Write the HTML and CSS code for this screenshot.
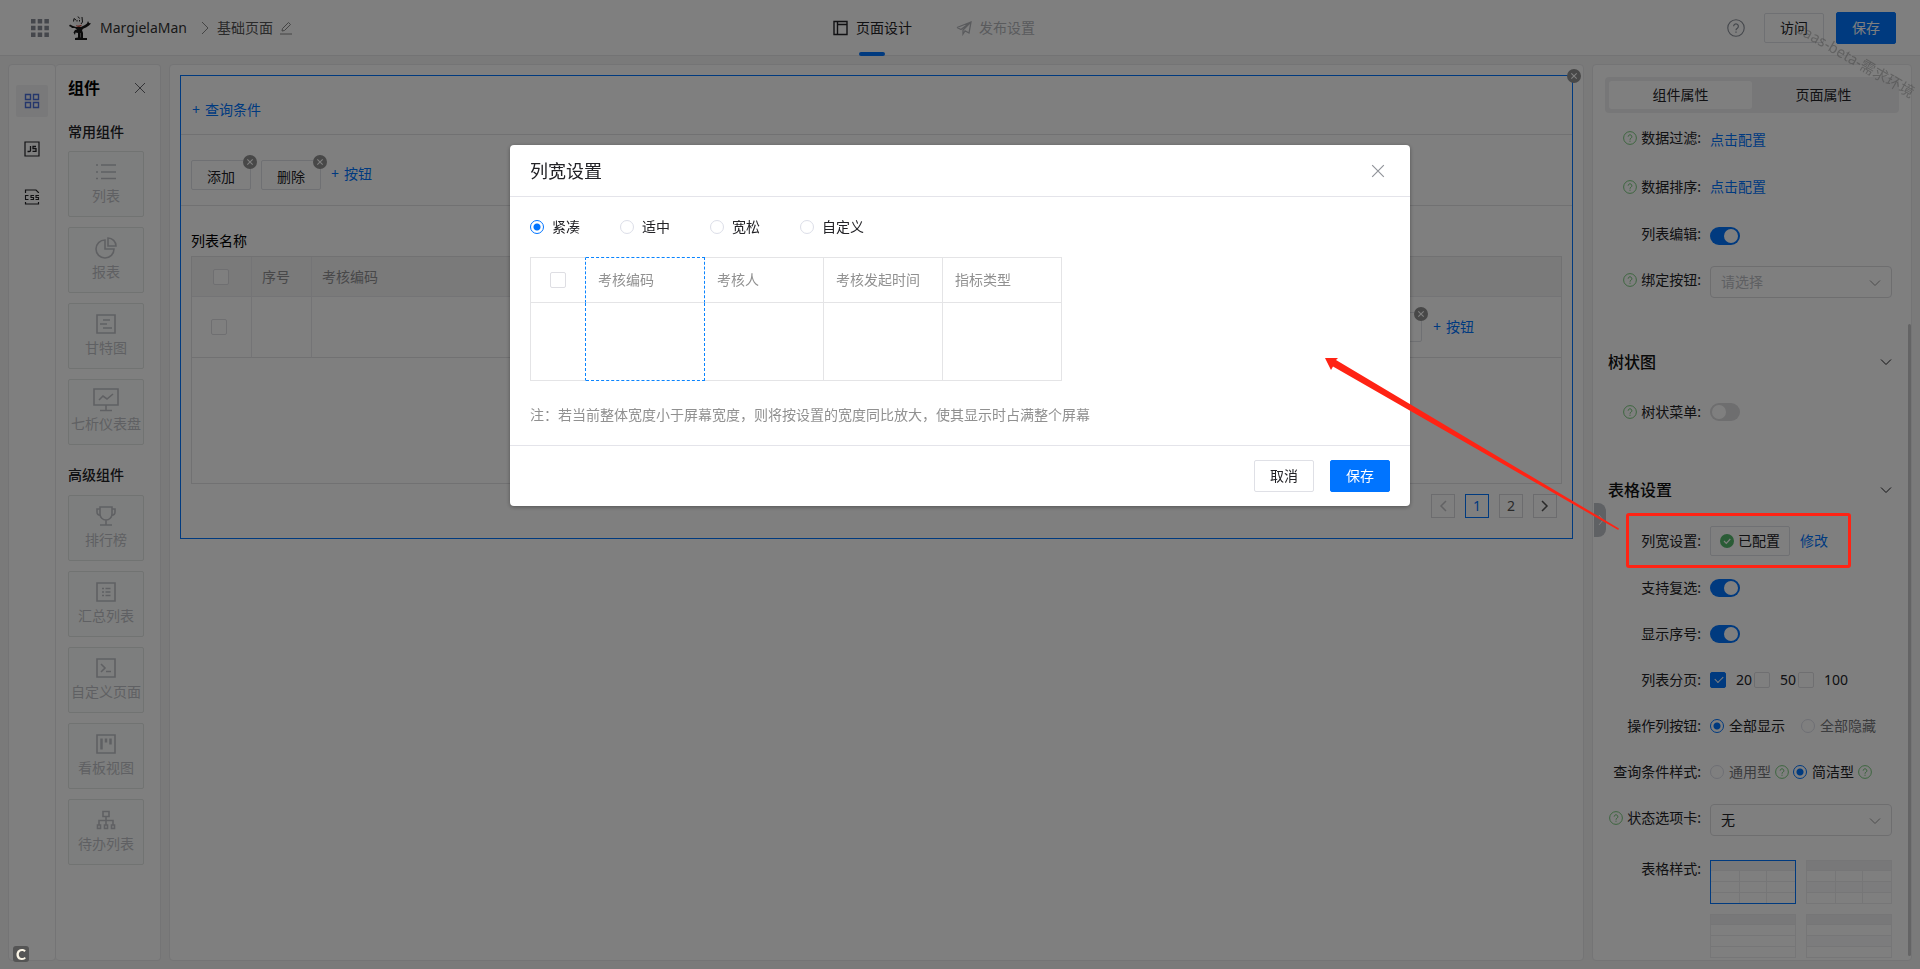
FILE: index.html
```html
<!DOCTYPE html>
<html lang="zh-CN">
<head>
<meta charset="utf-8">
<title>MargielaMan - 基础页面</title>
<link rel="stylesheet" href="styles.css">
</head>
<body>
<svg class="defs" width="0" height="0" aria-hidden="true">
  <symbol id="i-help" viewBox="0 0 16 16"><circle cx="8" cy="8" r="7.3" fill="none" stroke="currentColor"/><path d="M5.9 6.4a2.1 2.1 0 1 1 3.3 1.8C8.4 8.700 8 9 8 9.900M8 11.100v1.200" fill="none" stroke="currentColor" stroke-width="1.100"/></symbol>
  <symbol id="i-down" viewBox="0 0 12 12"><path d="M1 3.500l5 5 5-5" fill="none" stroke="currentColor"/></symbol>
  <symbol id="i-x" viewBox="0 0 12 12"><path d="M1 1l10 10M11 1L1 11" fill="none" stroke="currentColor"/></symbol>
  <symbol id="i-del" viewBox="0 0 14 14"><circle cx="7" cy="7" r="7" fill="#909090"/><path d="M4.300 4.300l5.400 5.400M9.700 4.300L4.300 9.700" stroke="#fff" stroke-width="1.100"/></symbol>
</svg>
<div class="app">
  <header class="topbar">
    <div class="brand">
      <svg class="i-apps" width="18" height="18" viewBox="0 0 18 18"><path d="M0 0h4.500v4.500H0zM6.700 0h4.500v4.500H6.700zM13.400 0h4.500v4.500h-4.500zM0 6.700h4.500v4.500H0zM6.700 6.700h4.500v4.500H6.700zM13.400 6.700h4.500v4.500h-4.500zM0 13.400h4.500v4.500H0zM6.700 13.400h4.500v4.500H6.700zM13.400 13.400h4.500v4.500h-4.500z"/></svg>
      <svg class="logo" width="22" height="24" viewBox="0 0 22 24"><path d="M4.500 3l2 1 1.500-3 3 .5 2-1 .5 5.500-3 3-4-.5-2-2z" fill="#f4f4f4"/><path d="M4.500 5.500l.5-3 2 1.500M9 .5l1.500 2M13 1l.5 5-1.500 2M8 4v1.500M10.500 4v1.500" stroke="#222" fill="none"/><path d="M0 10l1-1.500L4 10l3 1h5l4-2 2-1.500L19 5l1 2 2 .5-2 2-3 2-2.500 1L13 14l1 3v5h4v2H6v-2l3-.5V17l-2.500-.5L6 19l-1.500-2.500L6 14l2-.5L6 12l-3 0-1-1z" fill="#181818"/><path d="M7 9c2 1 4 .5 5.500-.5V10L10 11 7.500 10.500z" fill="#c4493c"/><path d="M11.500 17v4.500" stroke="#777"/></svg>
      <span class="app-name">MargielaMan</span>
      <svg class="crumb" width="8" height="12" viewBox="0 0 8 12"><path d="M1 0l6 6-6 6" fill="none" stroke="currentColor"/></svg>
      <span class="page-name">基础页面</span>
      <svg class="edit" width="14" height="14" viewBox="0 0 14 14"><path d="M1 13h12M3 10l.5-2.500L9.500 1.500l2 2-6 6z" fill="none" stroke="currentColor"/></svg>
    </div>
    <nav class="tabs">
      <a class="tab active" href="#design"><svg width="16" height="16" viewBox="0 0 16 16"><path d="M1 1.500h13v13H1zM4.500 1.500v13M4.500 4.500H14" fill="none" stroke="currentColor" stroke-width="1.400"/></svg>页面设计</a>
      <a class="tab" href="#publish"><svg width="16" height="16" viewBox="0 0 16 16"><path d="M1 7.500L15 2l-2 11-4.500-2.500M1 7.500L5 9.500 15 2 7 10v4l2-3" fill="none" stroke="currentColor" stroke-width="1.300"/></svg>发布设置</a>
    </nav>
    <div class="actions">
      <svg class="help-lg" width="18" height="18"><use href="#i-help"/></svg>
      <button class="btn sm" type="button">访问</button>
      <button class="btn primary" type="button">保存</button>
    </div>
  </header>
  <main class="work">
    <div class="rail">
      <button class="rail-btn on" type="button" aria-label="组件"><svg width="16" height="16" viewBox="0 0 16 16"><path d="M1.500 1.500h5v5h-5zM9.500 1.500h5v5h-5zM1.500 9.500h5v5h-5zM9.500 9.500h5v5h-5z" fill="none" stroke="currentColor" stroke-width="1.400"/></svg></button>
      <button class="rail-btn" type="button" aria-label="JS"><svg width="16" height="16" viewBox="0 0 16 16" fill="none" stroke="currentColor"><path d="M1 1h14v14H1z" stroke-width="1.200"/><path d="M6.500 5v4.500q0 1-1.200 1H3.500M12 5.500H9v2.200h3v2.600H8.500" stroke-width="1.300"/></svg></button>
      <button class="rail-btn" type="button" aria-label="CSS"><svg width="16" height="16" viewBox="0 0 16 16" fill="none" stroke="currentColor"><path d="M1.500 4V1h10.500l2.500 2.500V4M1.500 13v2h13v-2" stroke-width="1.200"/><path d="M4.500 6.500h-3v4h3M10 6.500H7v2h2.500v2H6.500M15 6.500h-3v2h2.500v2h-3" stroke-width="1.100"/></svg></button>
    </div>
    <aside class="comps">
      <div class="comps-head"><h2>组件</h2><button class="plain" type="button" aria-label="收起"><svg width="12" height="12"><use href="#i-x"/></svg></button></div>
      <h3>常用组件</h3>
      <div class="cards">
        <div class="card"><svg width="22" height="22" viewBox="0 0 22 22"><path d="M6 4h15M6 11h15M6 17.500h15M1 4h2M1 11h2M1 17.500h2" /></svg>列表</div>
        <div class="card"><svg width="22" height="22" viewBox="0 0 22 22"><path d="M10 3a9 9 0 1 0 9 9h-9zM13 1v8h8a8 8 0 0 0-8-8z"/></svg>报表</div>
        <div class="card"><svg width="22" height="22" viewBox="0 0 22 22"><path d="M2 2h18v18H2zM8 7h7M5 11h7M8 15h9"/></svg>甘特图</div>
        <div class="card"><svg width="26" height="24" viewBox="0 0 26 24"><path d="M1 1h24v16H1zM13 17v5M7 22.500h12M6 12l4-4 4 3 6-5"/></svg>七析仪表盘</div>
      </div>
      <h3>高级组件</h3>
      <div class="cards">
        <div class="card"><svg width="22" height="22" viewBox="0 0 22 22"><path d="M5 2h12v7a6 6 0 0 1-12 0zM5 4H2v3q0 3 3.500 3.500M17 4h3v3q0 3-3.500 3.500M11 15v5M5 20h12"/></svg>排行榜</div>
        <div class="card"><svg width="22" height="22" viewBox="0 0 22 22"><path d="M2 2h18v18H2zM7 7.500h2M7 11h2M7 14.500h2M10.500 7.500h5M10.500 11h5M10.500 14.500h5"/></svg>汇总列表</div>
        <div class="card"><svg width="22" height="22" viewBox="0 0 22 22"><path d="M2 2h18v18H2zM6 7l4 4-4 4M11 14.500h5"/></svg>自定义页面</div>
        <div class="card"><svg width="22" height="22" viewBox="0 0 22 22"><path d="M2 2h18v18H2z"/><path d="M6.500 5.500v11M11 5.500v4M15.500 5.500v6" stroke-width="2.500"/></svg>看板视图</div>
        <div class="card"><svg width="22" height="22" viewBox="0 0 22 22"><path d="M8 2.500h6v5H8zM11 7.500v8M4 15.500v-4h14v4M2.500 16h3v3.500h-3zM9.500 16h3v3.500h-3zM16.500 16h3v3.500h-3z"/></svg>待办列表</div>
      </div>
    </aside>
    <section class="canvas">
      <div class="block">
        <button class="del corner" type="button" aria-label="删除组件"><svg width="14" height="14"><use href="#i-del"/></svg></button>
        <div class="query"><button class="add" type="button"><span>+</span>查询条件</button></div>
        <div class="tools">
          <span class="tool"><button class="btn sm low" type="button">添加</button><svg class="del" width="14" height="14"><use href="#i-del"/></svg></span>
          <span class="tool"><button class="btn sm low" type="button">删除</button><svg class="del" width="14" height="14"><use href="#i-del"/></svg></span>
          <button class="add" type="button"><span>+</span>按钮</button>
        </div>
        <div class="list">
          <h4>列表名称</h4>
          <div class="grid-box">
            <table class="grid">
              <colgroup><col class="c-sm"><col class="c-sm"><col><col class="c-op"></colgroup>
              <thead><tr><th class="pick"><input class="check" type="checkbox" aria-label="全选"></th><th>序号</th><th>考核编码</th><th></th></tr></thead>
              <tbody><tr><td class="pick"><input class="check" type="checkbox" aria-label="选择行"></td><td></td><td></td><td><div class="ops"><span class="tool"><button class="btn sm" type="button" aria-label="行按钮"></button><svg class="del" width="14" height="14"><use href="#i-del"/></svg></span><button class="add" type="button"><span>+</span>按钮</button></div></td></tr></tbody>
            </table>
          </div>
          <nav class="pager" aria-label="分页">
            <button type="button" class="off" aria-label="上一页"><svg width="8" height="12" viewBox="0 0 8 12"><path d="M7 1L2 6l5 5" fill="none" stroke="currentColor" stroke-width="1.500"/></svg></button>
            <button type="button" class="cur">1</button>
            <button type="button">2</button>
            <button type="button" aria-label="下一页"><svg width="8" height="12" viewBox="0 0 8 12"><path d="M1 1l5 5-5 5" fill="none" stroke="currentColor" stroke-width="1.500"/></svg></button>
          </nav>
        </div>
      </div>
    </section>
    <aside class="props">
      <div class="seg"><button class="on" type="button">组件属性</button><button type="button">页面属性</button></div>
      <div class="form">
        <section class="group first">
          <div class="row tall"><span class="lab"><svg class="q"><use href="#i-help"/></svg>数据过滤:</span><div class="ctl"><a href="#filter">点击配置</a></div></div>
          <div class="row mid"><span class="lab"><svg class="q"><use href="#i-help"/></svg>数据排序:</span><div class="ctl"><a href="#sort">点击配置</a></div></div>
          <div class="row"><label class="lab" for="f-edit">列表编辑:</label><div class="ctl low"><input class="switch" id="f-edit" type="checkbox" checked></div></div>
          <div class="row"><label class="lab" for="f-bind"><svg class="q"><use href="#i-help"/></svg>绑定按钮:</label><div class="ctl low"><span class="sel"><select id="f-bind" class="empty"><option>请选择</option></select><svg width="12" height="12"><use href="#i-down"/></svg></span></div></div>
        </section>
        <section class="group">
          <div class="group-head"><h3>树状图</h3><svg width="12" height="12"><use href="#i-down"/></svg></div>
          <div class="row"><label class="lab" for="f-tree"><svg class="q"><use href="#i-help"/></svg>树状菜单:</label><div class="ctl"><input class="switch" id="f-tree" type="checkbox"></div></div>
        </section>
        <section class="group">
          <div class="group-head"><h3>表格设置</h3><svg width="12" height="12"><use href="#i-down"/></svg></div>
          <div class="row mid"><span class="lab">列宽设置:</span><div class="ctl"><span class="done"><svg width="14" height="14" viewBox="0 0 14 14"><circle cx="7" cy="7" r="7" fill="#54b96d"/><path d="M4 7l2.300 2.300L10.300 5" fill="none" stroke="#fff" stroke-width="1.200"/></svg>已配置</span><a class="modify" href="#width">修改</a></div></div>
          <div class="row"><label class="lab" for="f-multi">支持复选:</label><div class="ctl"><input class="switch" id="f-multi" type="checkbox" checked></div></div>
          <div class="row"><label class="lab" for="f-no">显示序号:</label><div class="ctl"><input class="switch" id="f-no" type="checkbox" checked></div></div>
          <div class="row"><span class="lab">列表分页:</span><div class="ctl pages"><label><input class="check" type="checkbox" checked>20</label><label><input class="check" type="checkbox">50</label><label><input class="check" type="checkbox">100</label></div></div>
          <div class="row"><span class="lab">操作列按钮:</span><div class="ctl radios wide"><label><input class="radio" type="radio" name="op" checked>全部显示</label><label class="dim"><input class="radio" type="radio" name="op">全部隐藏</label></div></div>
          <div class="row"><span class="lab">查询条件样式:</span><div class="ctl radios"><label class="dim"><input class="radio" type="radio" name="qs">通用型</label><svg class="q"><use href="#i-help"/></svg><label><input class="radio" type="radio" name="qs" checked>简洁型</label><svg class="q"><use href="#i-help"/></svg></div></div>
          <div class="row"><label class="lab" for="f-state"><svg class="q"><use href="#i-help"/></svg>状态选项卡:</label><div class="ctl low"><span class="sel"><select id="f-state"><option>无</option></select><svg width="12" height="12"><use href="#i-down"/></svg></span></div></div>
          <div class="row styles"><span class="lab">表格样式:</span><div class="ctl thumbs">
            <div class="thumb on"><i></i><i></i><i></i><b></b><b></b></div>
            <div class="thumb"><i></i><i class="alt"></i><i></i><b></b><b></b></div>
            <div class="thumb"><i></i><i></i><i></i></div>
            <div class="thumb"><i></i><i class="alt"></i><i></i></div>
          </div></div>
        </section>
      </div>
      <div class="bar"></div>
      <button class="handle" type="button" aria-label="收起属性"><svg width="6" height="10" viewBox="0 0 6 10"><path d="M1 0l4 5-4 5" fill="none" stroke="#fff"/></svg></button>
    </aside>
  </main>
</div>
<div class="mask">
  <section class="modal" role="dialog" aria-labelledby="dlg-title">
    <header class="modal-head"><h2 id="dlg-title">列宽设置</h2><button class="plain close" type="button" aria-label="关闭"><svg width="14" height="14"><use href="#i-x"/></svg></button></header>
    <div class="modal-body">
      <div class="modes">
        <label><input class="radio" type="radio" name="mode" checked>紧凑</label>
        <label><input class="radio" type="radio" name="mode">适中</label>
        <label><input class="radio" type="radio" name="mode">宽松</label>
        <label><input class="radio" type="radio" name="mode">自定义</label>
      </div>
      <table class="preview">
        <thead><tr><th class="pick"><input class="check" type="checkbox" aria-label="全选"></th><th class="hot">考核编码</th><th>考核人</th><th>考核发起时间</th><th>指标类型</th></tr></thead>
        <tbody><tr><td class="pick"></td><td class="hot"></td><td></td><td></td><td></td></tr></tbody>
      </table>
      <p class="note">注：若当前整体宽度小于屏幕宽度，则将按设置的宽度同比放大，使其显示时占满整个屏幕</p>
    </div>
    <footer class="modal-foot"><button class="btn" type="button">取消</button><button class="btn primary" type="button">保存</button></footer>
  </section>
</div>
<div class="watermark">saas-beta-需求环境</div>
<div class="badge">C</div>
<div class="callout"></div>
<svg class="arrow" width="294" height="172" viewBox="0 0 294 172"><path d="M0 0h13l-2 2 283 168.500-.8 1.500L8 8.500 6 12z" fill="#ff2314"/></svg>
</body>
</html>
```
FILE: styles.css
```css
* { box-sizing: border-box; }
body {
  margin: 0;
  font: 14px/20px "Noto Sans", "Noto Sans CJK SC", sans-serif;
  color: #222226;
  background: #f4f4f4;
  overflow: hidden;
}
button, input, select { font: inherit; color: inherit; margin: 0; }
button { cursor: pointer; }
svg { flex: none; display: block; }
h2, h3, h4, p { margin: 0; }
a { color: #0074ff; text-decoration: none; }
.defs { position: absolute; }
.app { display: flex; flex-direction: column; height: 100vh; }

/* top bar */
.topbar {
  display: grid;
  grid-template-columns: 1fr auto 1fr;
  height: 56px;
  background: #fff;
  border-bottom: 1px solid #e6e6e8;
}
.brand { display: flex; align-items: center; padding-left: 31px; }
.i-apps { fill: #8a8f99; }
.logo { margin-left: 20px; }
.app-name { margin-left: 9px; color: #333; }
.crumb { margin: 0 8px 0 14px; color: #888; }
.page-name { color: #555; }
.edit { margin-left: 6px; color: #888; }
.tabs { display: flex; gap: 44px; padding-right: 52px; }
.tab { display: flex; align-items: center; gap: 7px; position: relative; color: #b4b6bb; }
.tab.active { color: #222226; }
.tab.active::after {
  content: "";
  position: absolute;
  left: 26px;
  bottom: -1px;
  width: 26px;
  height: 4px;
  border-radius: 2px;
  background: #0074ff;
}
.actions { display: flex; align-items: center; justify-content: flex-end; gap: 12px; padding-right: 24px; }
.help-lg { color: #8a8f99; margin-right: 7px; }
.btn {
  width: 60px;
  height: 32px;
  padding: 0;
  border: 1px solid #dfe0e6;
  border-radius: 2px;
  background: #fff;
}
.btn.sm { height: 30px; }
.btn.low { padding-top: 4px; }
.btn.primary { background: #0074ff; border-color: #0074ff; color: #fff; }
.plain { border: 0; padding: 0; background: none; color: #66676c; }

/* work area */
.work { flex: 1; min-height: 0; display: flex; padding: 8px; }
.rail, .comps, .canvas, .props { background: #fff; border: 1px solid #e8e8ea; border-radius: 4px; }
.rail { flex: none; width: 48px; display: flex; flex-direction: column; align-items: center; gap: 16px; padding-top: 20px; }
.rail-btn { width: 32px; height: 32px; padding: 8px; border: 0; border-radius: 2px; background: none; }
.rail-btn.on { background: #f2f2f4; color: #4a6fd8; }
.comps { flex: none; width: 105px; padding: 13px 14px 0 12px; border-left: 0; }
.comps-head { display: flex; align-items: center; justify-content: space-between; height: 20px; }
.comps-head h2 { font-size: 16px; font-weight: 700; color: #000; }
.comps h3 { margin: 24px 0 9px; font-size: 14px; font-weight: 500; }
.comps .cards + h3 { margin-top: 20px; margin-bottom: 10px; }
.cards { display: grid; gap: 10px; }
.card {
  display: grid;
  grid-template-rows: 24px 20px;
  place-items: center;
  align-content: start;
  gap: 2px;
  height: 66px;
  padding-top: 8px;
  width: 76px;
  white-space: nowrap;
  border: 1px solid #e2e6e4;
  border-radius: 2px;
  background: #fbfdfc;
  color: #bfc1c6;
}
.card svg { fill: none; stroke: currentColor; stroke-width: 1.6; }

/* canvas */
.canvas { flex: 1; min-width: 0; margin: 0 8px; padding: 10px; }
.block { position: relative; border: 1px solid #0074ff; }
.del { position: absolute; top: -5px; right: -6px; }
.corner { top: -7px; right: -9px; padding: 0; border: 0; background: none; }
.add { display: flex; gap: 5px; border: 0; padding: 0; background: none; color: #0074ff; }
.query { display: flex; align-items: center; height: 59px; padding: 10px 11px 0; border-bottom: 1px solid #e2e2e5; }
.tools { display: flex; align-items: flex-start; gap: 10px; height: 71px; padding: 25px 10px 0; border-bottom: 1px solid #e2e2e5; }
.tool { position: relative; display: flex; }
.tools .add { margin-top: 4px; }
.list { padding: 25px 10px 20px; }
.list h4 { font-weight: 400; font-size: 14px; margin-bottom: 5px; color: #000; }
.grid-box { height: 228px; border: 1px solid #e2e2e5; }
.grid { width: 100%; table-layout: fixed; border-collapse: separate; border-spacing: 0; }
.c-sm { width: 60px; }
.c-op { width: 240px; }
.grid th { height: 40px; padding: 0 10px; text-align: left; font-weight: 400; color: #909093; background: #f4f4f4; border-bottom: 1px solid #e8e8ec; }
.grid td { height: 61px; padding: 0 10px; border-bottom: 1px solid #e2e2e5; }
.grid th:nth-child(-n+2), .grid td:nth-child(-n+2) { border-right: 1px solid #e8e8ec; }
.grid .pick { padding: 0 0 0 21px; }
.grid td.pick { padding-left: 19px; }
.ops { display: flex; align-items: center; gap: 11px; padding-left: 31px; }
.pager { display: flex; justify-content: flex-end; gap: 10px; padding: 10px 5px 0 0; }
.pager button { display: grid; place-items: center; width: 24px; height: 24px; padding: 0; border: 1px solid #d8d8dc; background: #fff; color: #555; }
.pager .cur { border-color: #0074ff; color: #0074ff; }
.pager .off { color: #c4c4c8; }

/* form controls */
.check, .radio, .switch { appearance: none; flex: none; display: block; background: #fff; }
.check { width: 16px; height: 16px; border: 1px solid #dedee3; border-radius: 2px; position: relative; }
.check:checked { background: #0074ff; border-color: #0074ff; }
.check:checked::after {
  content: "";
  position: absolute;
  left: 4px;
  top: 3px;
  width: 7px;
  height: 4px;
  border: solid #fff;
  border-width: 0 0 1px 1px;
  transform: rotate(-45deg);
}
.radio { width: 14px; height: 14px; border: 1px solid #dcdee8; border-radius: 50%; }
.radio:checked { border-color: #0074ff; background: radial-gradient(circle, #0074ff 3px, #fff 4px); }
.switch { width: 30px; height: 18px; border-radius: 9px; padding: 2px; background: #dcdcde; }
.switch::before { content: ""; display: block; width: 14px; height: 14px; border-radius: 50%; background: #fff; }
.switch:checked { background: #0074ff; }
.switch:checked::before { margin-left: 12px; }

/* properties */
.props { position: relative; flex: none; width: 320px; padding-top: 12px; overflow: hidden; }
.seg { display: flex; height: 36px; margin: 0 12px; padding: 4px; border-radius: 4px; background: #efeff1; }
.seg button { flex: 1; border: 0; border-radius: 3px; background: none; }
.seg .on { background: #fff; }
.group { margin-bottom: 32px; }
.group.first { margin-bottom: 36px; }
.group-head { display: flex; align-items: center; justify-content: space-between; height: 46px; margin: 0 19px 4px 15px; }
.group-head h3 { font-size: 16px; font-weight: 500; color: #111; }
.row { display: grid; grid-template-columns: 108px 182px; column-gap: 9px; align-items: center; height: 46px; }
.row.tall { height: 50px; }
.row.mid { height: 48px; }
.lab { display: flex; align-items: center; justify-content: flex-end; gap: 4px; white-space: nowrap; }
.q { width: 14px; height: 14px; color: #67c26b; }
.ctl { display: flex; align-items: center; white-space: nowrap; }
.ctl.low, .tall .ctl { margin-top: 4px; }
.sel { position: relative; flex: 1; }
.sel select { appearance: none; display: block; width: 100%; height: 32px; padding: 0 10px; border: 1px solid #dcdcdf; border-radius: 4px; background: #fff; }
.sel .empty { color: #bdbfc5; }
.sel svg { position: absolute; right: 11px; top: 11px; color: #999; }
.done { display: flex; align-items: center; gap: 4px; height: 30px; padding: 0 9px; border: 1px solid #dfe0e6; border-radius: 2px; }
.modify { margin-left: 10px; }
.pages { gap: 2px; }
.pages label { display: flex; align-items: center; gap: 10px; }
.radios { gap: 4px; }
.radios.wide { gap: 16px; }
.radios label { display: flex; align-items: center; gap: 5px; }
.dim { color: #77787c; }
.row.styles { height: auto; align-items: start; padding-top: 18px; }
.thumbs { display: grid; grid-template-columns: 86px 86px; gap: 10px; margin-top: 1px; }
.thumb { position: relative; height: 44px; padding-top: 9px; border: 1px solid #ececee; background: #f1f1f3; }
.thumb.on { border-color: #0074ff; }
.thumb i { display: block; height: 11px; background: #fff; border-top: 1px solid #ececee; }
.thumb .alt { background: #f8f8fa; }
.thumb b { position: absolute; top: 10px; bottom: 0; left: 33%; width: 1px; background: #ececee; }
.thumb b + b { left: 66%; }
.bar { position: absolute; right: 0; top: 259px; bottom: 4px; width: 3px; border-radius: 2px; background: #c8c8ca; }
.handle { position: absolute; left: 1px; top: 438px; width: 12px; height: 34px; padding: 0 4px; border: 0; border-radius: 0 8px 8px 0; background: #bfc2c9; }

/* dialog */
.mask { position: fixed; inset: 0; padding-top: 145px; background: rgba(0, 0, 0, .5); }
.modal { width: 900px; max-width: 100%; margin: 0 auto; background: #fff; border-radius: 4px; box-shadow: 0 1px 4px rgba(0, 0, 0, .35); }
.modal-head { display: flex; align-items: center; justify-content: space-between; height: 52px; padding: 0 25px 0 20px; border-bottom: 1px solid #e4e4ea; }
.modal-head h2 { font-size: 18px; font-weight: 400; }
.close { color: #909399; }
.modal-body { padding: 20px; }
.modes { display: flex; }
.modes label { display: flex; align-items: center; gap: 8px; width: 90px; }
.preview { margin: 20px 0 24px; border-collapse: separate; border-spacing: 0; table-layout: fixed; width: 532px; color: #909090; }
.preview th, .preview td {
  width: 119px;
  padding: 0 12px;
  border: solid #e4e4e6;
  border-width: 0 1px 1px 0;
  text-align: left;
  font-weight: 400;
  white-space: nowrap;
}
.preview th { height: 46px; border-top-width: 1px; }
.preview td { height: 78px; }
.preview .pick { width: 56px; padding: 0 0 0 19px; border-left-width: 1px; border-right: 1px dashed #0a84ff; }
.preview .hot { border-right: 1px dashed #0a84ff; }
.preview th.hot { border-top: 1px dashed #0a84ff; }
.preview td.hot { border-bottom: 1px dashed #0a84ff; }
.note { color: #909090; }
.modal-foot { display: flex; justify-content: flex-end; gap: 16px; padding: 14px 20px; border-top: 1px solid #e4e4ea; }

/* floating marks */
.watermark { position: fixed; top: 50px; right: -2px; color: rgba(70, 70, 70, .5); font-size: 15px; white-space: nowrap; transform: rotate(30deg); }
.badge { position: fixed; left: 13px; bottom: 7px; width: 16px; height: 16px; border-radius: 3px; background: #555; color: #fbf5e6; font: 900 15px/16px Lato, sans-serif; text-align: center; }
.callout { position: fixed; right: 69px; top: 513px; width: 225px; height: 55px; border: 3px solid #ff2314; border-radius: 3px; }
.arrow { position: fixed; right: 301px; top: 358px; }
```
